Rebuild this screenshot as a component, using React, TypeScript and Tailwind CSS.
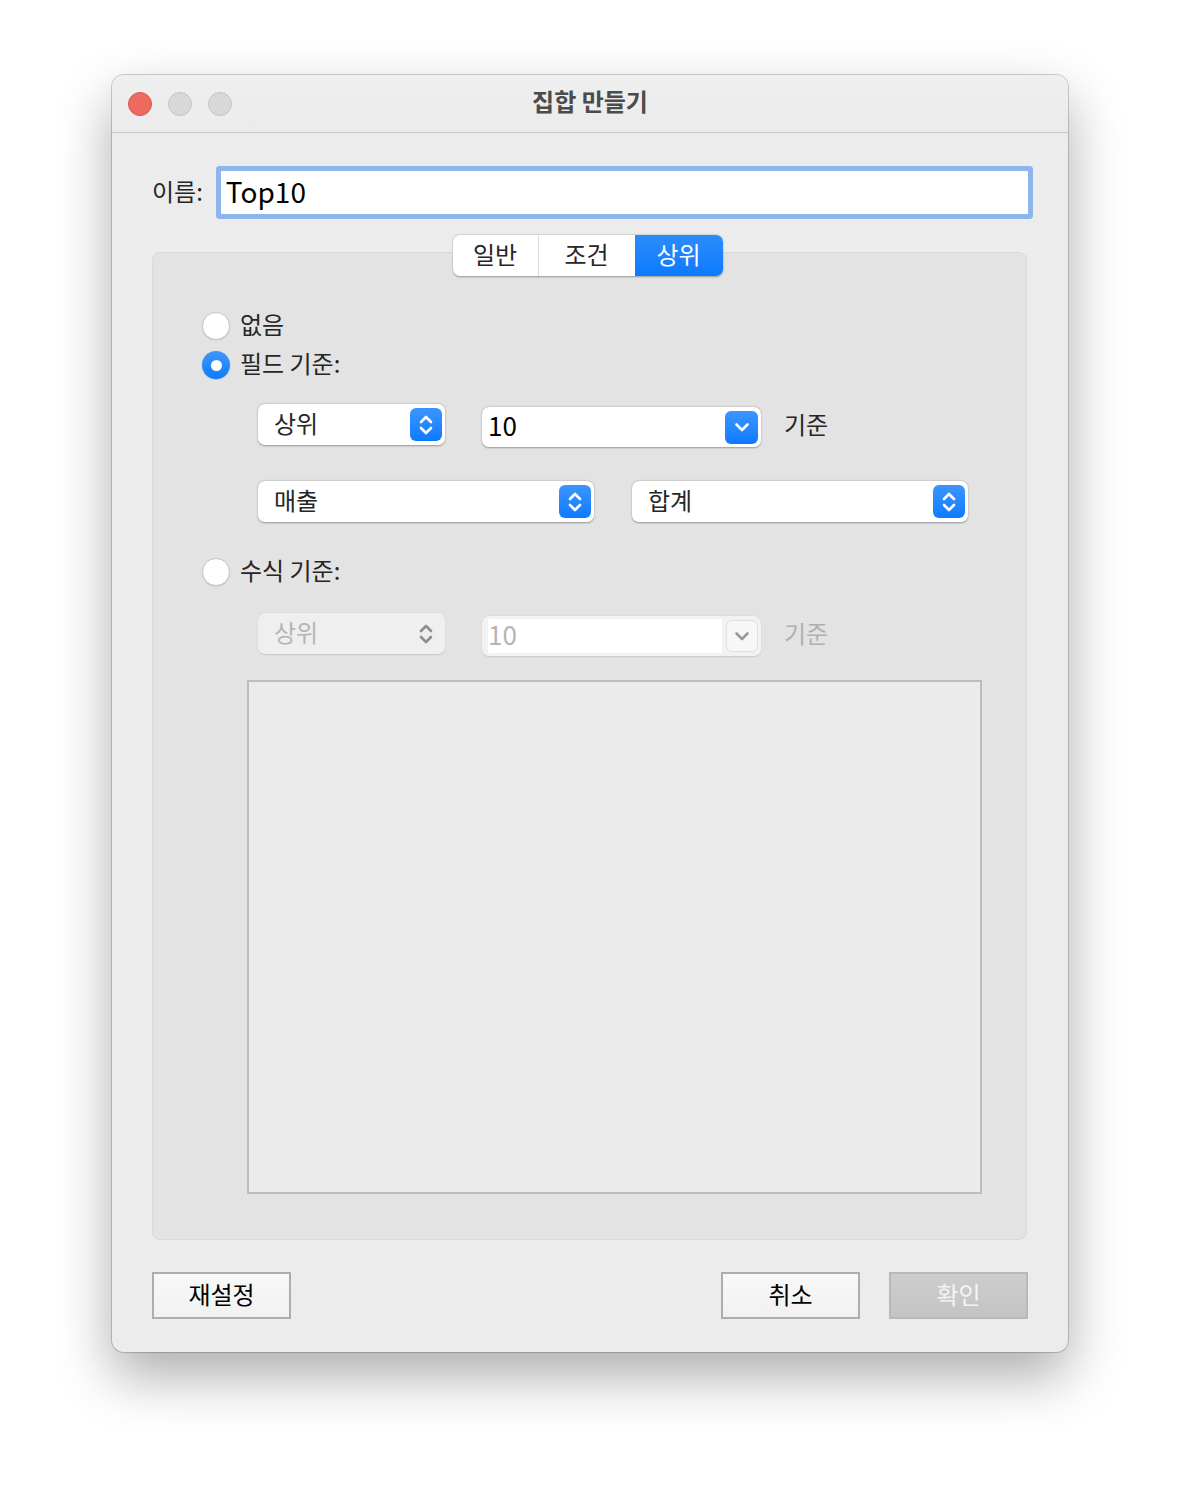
import React from 'react';

const FONT = "font-['Noto_Sans_CJK_KR','Noto_Sans',sans-serif]";

function UpDown({ color = '#ffffff' }: { color?: string }) {
  return (
    <svg width="16" height="26" viewBox="0 0 16 26" fill="none">
      <path d="M3 10 L8 5 L13 10" stroke={color} strokeWidth="2.6" strokeLinecap="round" strokeLinejoin="round" />
      <path d="M3 16 L8 21 L13 16" stroke={color} strokeWidth="2.6" strokeLinecap="round" strokeLinejoin="round" />
    </svg>
  );
}

function Down({ color = '#ffffff' }: { color?: string }) {
  return (
    <svg width="18" height="12" viewBox="0 0 18 12" fill="none">
      <path d="M3.5 3.5 L9 9 L14.5 3.5" stroke={color} strokeWidth="2.6" strokeLinecap="round" strokeLinejoin="round" />
    </svg>
  );
}

function Radio({ checked, label }: { checked?: boolean; label: string }) {
  return (
    <div className="flex items-center gap-[10px] h-[30px]">
      {checked ? (
        <span className="w-[28px] h-[28px] rounded-full bg-gradient-to-b from-[#3d97fc] to-[#0a7aff] flex items-center justify-center shadow-[0_0.5px_1px_rgba(0,0,0,0.3)]">
          <span className="w-[11px] h-[11px] rounded-full bg-white" />
        </span>
      ) : (
        <span className="w-[28px] h-[28px] rounded-full bg-white border border-[#c9c9c9] shadow-[0_0.5px_1px_rgba(0,0,0,0.15)]" />
      )}
      <span className="text-[24px] text-[#262626] leading-none mb-[4px]">{label}</span>
    </div>
  );
}

function Popup({ label, width, disabled }: { label: string; width: string; disabled?: boolean }) {
  return (
    <div
      className={`${width} h-[41px] rounded-[7px] flex items-center justify-between pl-[16px] pr-[3px] ${
        disabled
          ? 'bg-[#efefef] shadow-[0_0.5px_1.5px_rgba(0,0,0,0.12)]'
          : 'bg-white shadow-[0_0.5px_2px_rgba(0,0,0,0.35)]'
      }`}
    >
      <span className={`text-[24px] leading-none mb-[4px] ${disabled ? 'text-[#b5b5b5]' : 'text-[#262626]'}`}>{label}</span>
      {disabled ? (
        <span className="w-[32px] h-[33px] flex items-center justify-center">
          <UpDown color="#8e8e8e" />
        </span>
      ) : (
        <span className="w-[32px] h-[33px] rounded-[6px] bg-gradient-to-b from-[#3b95fc] to-[#0a7aff] flex items-center justify-center">
          <UpDown />
        </span>
      )}
    </div>
  );
}

function Combo({ value, disabled }: { value: string; disabled?: boolean }) {
  return (
    <div
      className={`w-[279px] h-[40px] mt-[3px] rounded-[7px] flex items-center justify-between pl-[6px] pr-[3px] ${
        disabled ? 'bg-[#f2f2f2] shadow-[0_0.5px_1.5px_rgba(0,0,0,0.12)]' : 'bg-white shadow-[0_0.5px_2px_rgba(0,0,0,0.35)]'
      }`}
    >
      {disabled ? (
        <div className="flex-1 h-[34px] bg-white flex items-center mr-[4px]">
          <span className="text-[26px] leading-none mb-[4px] text-[#b5b5b5]">{value}</span>
        </div>
      ) : (
        <span className="text-[26px] leading-none mb-[4px] text-black">{value}</span>
      )}
      {disabled ? (
        <span className="w-[32px] h-[32px] rounded-[6px] bg-[#f7f7f7] border border-[#e0e0e0] flex items-center justify-center">
          <Down color="#9a9a9a" />
        </span>
      ) : (
        <span className="w-[33px] h-[33px] rounded-[6px] bg-gradient-to-b from-[#3b95fc] to-[#0a7aff] flex items-center justify-center">
          <Down />
        </span>
      )}
    </div>
  );
}

function Btn({ label, disabled }: { label: string; disabled?: boolean }) {
  return (
    <div
      className={`w-[139px] h-[47px] flex items-center justify-center border-2 ${
        disabled
          ? 'border-[#b9b9b9] bg-gradient-to-b from-[#cdcdcd] to-[#c4c4c4] text-[#f4f4f4]'
          : 'border-[#adadad] bg-gradient-to-b from-[#f8f8f8] to-[#f1f1f1] text-black'
      }`}
    >
      <span className="text-[24px] leading-none mb-[4px]">{label}</span>
    </div>
  );
}

export default function App() {
  return (
    <div className={`${FONT} bg-white min-h-[1500px] pt-[75px] flex justify-center`}>
      <div className="w-[956px] h-[1277px] rounded-[12px] bg-[#ececec] overflow-hidden flex flex-col shadow-[0_24px_55px_rgba(0,0,0,0.33),0_0_0_1px_rgba(0,0,0,0.18)]">
        {/* title bar */}
        <div className="h-[58px] shrink-0 flex items-center px-[16px] border-b border-[#c9c9c9] bg-gradient-to-b from-[#efefef] to-[#ebebeb]">
          <div className="flex gap-[16px]">
            <span className="w-[24px] h-[24px] rounded-full bg-[#ee6a5f] border border-[#d9564c]" />
            <span className="w-[24px] h-[24px] rounded-full bg-[#d8d8d8] border border-[#c4c4c4]" />
            <span className="w-[24px] h-[24px] rounded-full bg-[#d8d8d8] border border-[#c4c4c4]" />
          </div>
          <div className="flex-1 flex justify-center pr-[104px]">
            <span className="text-[24px] font-bold text-[#4b4b4b] leading-none mb-[6px]">집합 만들기</span>
          </div>
        </div>

        <div className="flex-1 flex flex-col px-[40px] pt-[38px]">
          {/* name row */}
          <div className="flex items-center gap-[18px]">
            <span className="text-[24px] text-[#262626] leading-none mb-[4px]">이름:</span>
            <div className="flex-1 h-[43px] bg-white rounded-[1px] flex items-center pl-[5px] shadow-[0_0_0_5px_#8fb6ec]">
              <span className="text-[28px] text-black leading-none mb-[4px]">Top10</span>
            </div>
          </div>

          {/* group box */}
          <div className="mt-[38px] w-[875px] bg-[#e3e3e3] border border-[#d9d9d9] rounded-[8px] flex flex-col pb-[45px]">
            <div className="-mt-[18px] flex justify-center pr-[4px]">
              <div className="flex h-[41px] rounded-[7px] bg-white overflow-hidden shadow-[0_0.5px_2px_rgba(0,0,0,0.35)]">
                <div className="w-[86px] flex items-center justify-center border-r border-[#dcdcdc]">
                  <span className="text-[24px] text-[#262626] leading-none mb-[4px]">일반</span>
                </div>
                <div className="w-[96px] flex items-center justify-center">
                  <span className="text-[24px] text-[#262626] leading-none mb-[4px]">조건</span>
                </div>
                <div className="w-[88px] flex items-center justify-center bg-gradient-to-b from-[#2b8cfb] to-[#0a7aff]">
                  <span className="text-[24px] text-white leading-none mb-[4px]">상위</span>
                </div>
              </div>
            </div>

            <div className="pl-[49px] mt-[35px] flex flex-col">
              <Radio label="없음" />
              <div className="mt-[9px]">
                <Radio checked label="필드 기준:" />
              </div>
            </div>

            <div className="pl-[105px] mt-[24px] flex items-start h-[44px]">
              <Popup label="상위" width="w-[187px]" />
              <div className="ml-[37px]">
                <Combo value="10" />
              </div>
              <span className="ml-[23px] mt-[6px] text-[24px] text-[#262626] leading-[28px]">기준</span>
            </div>

            <div className="pl-[105px] mt-[33px] flex items-start gap-[38px]">
              <Popup label="매출" width="w-[336px]" />
              <Popup label="합계" width="w-[336px]" />
            </div>

            <div className="pl-[49px] mt-[35px]">
              <Radio label="수식 기준:" />
            </div>

            <div className="pl-[105px] mt-[26px] flex items-start h-[44px]">
              <Popup label="상위" width="w-[187px]" disabled />
              <div className="ml-[37px]">
                <Combo value="10" disabled />
              </div>
              <span className="ml-[23px] mt-[6px] text-[24px] text-[#b0b0b0] leading-[28px]">기준</span>
            </div>

            <div className="ml-[94px] mt-[23px] w-[735px] h-[514px] bg-[#ebebeb] border-2 border-[#bdbdbd]" />
          </div>

          {/* buttons */}
          <div className="mt-[32px] flex items-center">
            <Btn label="재설정" />
            <div className="flex-1" />
            <Btn label="취소" />
            <div className="ml-[29px]">
              <Btn label="확인" disabled />
            </div>
          </div>
        </div>
      </div>
    </div>
  );
}
